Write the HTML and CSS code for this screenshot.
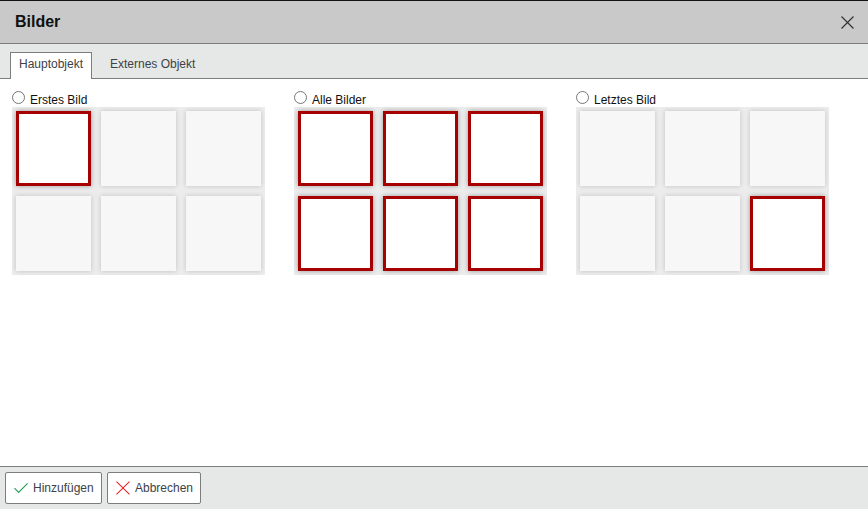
FILE: index.html
```html
<!DOCTYPE html>
<html lang="de">
<head>
<meta charset="utf-8">
<title>Bilder</title>
<link rel="stylesheet" href="styles.css">
</head>
<body>
<div class="dialog">
  <header class="titlebar">
    <h1 class="title">Bilder</h1>
    <button class="close" aria-label="Schließen">
      <svg width="13" height="13" viewBox="0 0 13 13"><path d="M0.5 0.5L12.5 12.5M12.5 0.5L0.5 12.5" stroke="#333" stroke-width="1.2" fill="none"/></svg>
    </button>
  </header>
  <nav class="tabs">
    <span class="tab active">Hauptobjekt</span>
    <span class="tab">Externes Objekt</span>
  </nav>
  <main class="content">
    <section class="option">
      <label class="option-label"><input type="radio" name="b" class="radio"><span>Erstes Bild</span></label>
      <div class="grid">
        <div class="cell on"></div><div class="cell"></div><div class="cell"></div>
        <div class="cell"></div><div class="cell"></div><div class="cell"></div>
      </div>
    </section>
    <section class="option">
      <label class="option-label"><input type="radio" name="b" class="radio"><span>Alle Bilder</span></label>
      <div class="grid">
        <div class="cell on"></div><div class="cell on"></div><div class="cell on"></div>
        <div class="cell on"></div><div class="cell on"></div><div class="cell on"></div>
      </div>
    </section>
    <section class="option">
      <label class="option-label"><input type="radio" name="b" class="radio"><span>Letztes Bild</span></label>
      <div class="grid">
        <div class="cell"></div><div class="cell"></div><div class="cell"></div>
        <div class="cell"></div><div class="cell"></div><div class="cell on"></div>
      </div>
    </section>
  </main>
  <footer class="footer">
    <button class="btn">
      <svg width="14" height="10" viewBox="0 0 14 10"><path d="M0.5 5.2L4.6 9.4L13.6 0.4" stroke="#1f9d55" stroke-width="1.1" fill="none"/></svg>
      <span>Hinzufügen</span>
    </button>
    <button class="btn btn-cancel">
      <svg width="14" height="14" viewBox="0 0 14 14"><path d="M0.5 0.5L13.5 13.5M13.5 0.5L0.5 13.5" stroke="#e8262a" stroke-width="1.1" fill="none"/></svg>
      <span>Abbrechen</span>
    </button>
  </footer>
</div>
</body>
</html>
```
FILE: styles.css
```css
* { box-sizing: border-box; }
html, body { margin: 0; height: 100%; }
body { font-family: "Liberation Sans", Arial, sans-serif; background: #fff; overflow: hidden; }
.dialog { display: flex; flex-direction: column; height: 509px; width: 868px; }
.titlebar {
  height: 44px; flex: none;
  background: #c8c9c8;
  border-top: 1px solid #111;
  border-bottom: 1px solid #7d7d7d;
  display: flex; align-items: center; justify-content: space-between;
  padding: 0 14px 0 15px;
}
.title { margin: 0; font-size: 16px; font-weight: 700; color: #111; }
.close { border: 0; background: none; padding: 0; display: flex; }
.tabs {
  height: 35px; flex: none;
  background: #e6e8e7;
  border-bottom: 1px solid #7d7d7d;
  display: flex; align-items: flex-end;
  gap: 9px;
  padding-left: 10px;
  font-size: 12px; color: #3c4248;
}
.tab { height: 27px; padding: 0 8px; line-height: 23px; margin-bottom: -1px; border: 1px solid transparent; border-bottom: 0; }
.tab.active { background: #fff; border-color: #7d7d7d; width: 82px; }
.content { flex: 1; display: flex; gap: 29px; padding: 12px 12px 0; align-items: flex-start; }
.option { width: 253px; }
.option-label { display: flex; align-items: center; height: 16px; font-size: 12px; color: #111; }
.radio { margin: 0 5px 0 0; width: 13px; height: 13px; position: relative; top: -2px; }
.option-label span { position: relative; top: 1px; }
.grid {
  display: grid; grid-template-columns: repeat(3, 75px); grid-auto-rows: 75px;
  gap: 10px; padding: 4px;
  background: #ececec;
}
.cell { background: #f7f7f7; box-shadow: 0 0 5px rgba(0,0,0,.18); }
.cell.on { background: #fff; border: 3px solid #a60000; box-shadow: 0 0 5px rgba(0,0,0,.35); }
.footer {
  height: 43px; flex: none;
  background: #e6e8e7;
  border-top: 1px solid #7d7d7d;
  display: flex; gap: 5px; padding: 5px 5px 0;
}
.btn {
  width: 97px; height: 32px; background: #fff;
  border: 1px solid #7d7d7d; border-radius: 2px;
  display: flex; align-items: center; gap: 5px;
  font: 12px "Liberation Sans", Arial, sans-serif; color: #3c4248;
  padding: 0 7px 0 8px;
}
.btn-cancel { width: 94px; }
```
